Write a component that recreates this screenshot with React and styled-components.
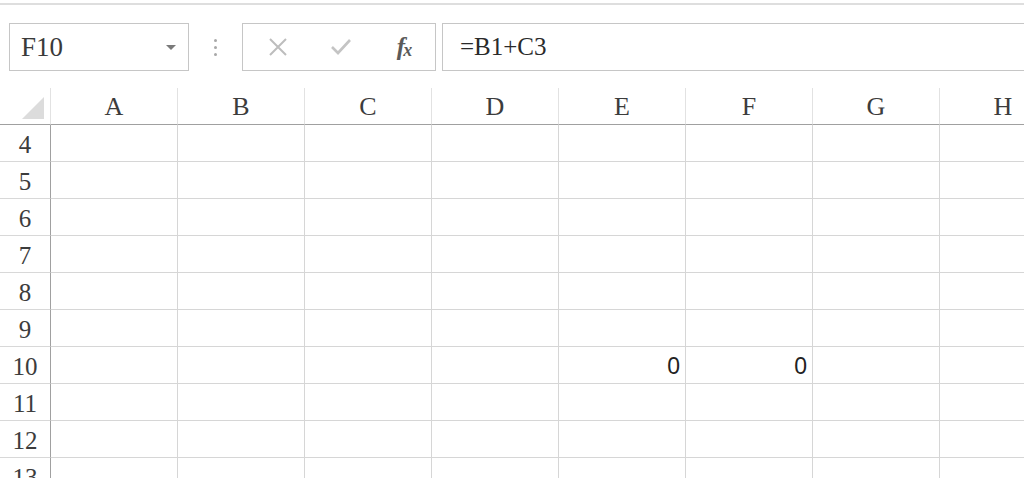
import React from "react";
import styled, { createGlobalStyle } from "styled-components";

const GlobalStyle = createGlobalStyle`
  html, body {
    margin: 0;
    padding: 0;
    background: #ffffff;
    overflow: hidden;
  }
  * {
    box-sizing: border-box;
  }
`;

const COLUMNS = ["A", "B", "C", "D", "E", "F", "G", "H"];
const ROWS = [4, 5, 6, 7, 8, 9, 10, 11, 12, 13];
// values shown in the sheet, keyed by "row:col"
const VALUES = { "10:E": "0", "10:F": "0" };

const serif = `"Liberation Serif", "DejaVu Serif", serif`;

const Page = styled.div`
  width: 1024px;
  height: 478px;
  overflow: hidden;
  padding-top: 3px;
  font-family: ${serif};
`;

const TopRule = styled.div`
  height: 2px;
  background: #dedede;
`;

const FormulaBar = styled.div`
  display: flex;
  align-items: center;
  height: 48px;
  margin-top: 18px;
  padding-left: 9px;
`;

const NameBox = styled.div`
  position: relative;
  display: flex;
  align-items: center;
  width: 180px;
  height: 48px;
  border: 1px solid #c6c6c6;
  padding-left: 11px;
  font-family: ${serif};
  font-size: 27px;
  color: #3a3a3a;
`;

const Caret = styled.span`
  position: absolute;
  right: 12px;
  top: 21px;
  width: 0;
  height: 0;
  border-left: 5px solid transparent;
  border-right: 5px solid transparent;
  border-top: 5px solid #7a7a7a;
`;

const Grip = styled.div`
  display: flex;
  flex-direction: column;
  align-items: center;
  justify-content: center;
  gap: 4px;
  width: 53px;
  height: 48px;
  & > span {
    width: 3px;
    height: 3px;
    border-radius: 50%;
    background: #a8a8a8;
  }
`;

const ActionBox = styled.div`
  display: flex;
  align-items: center;
  width: 194px;
  height: 48px;
  border: 1px solid #c6c6c6;
  padding-left: 3px;
`;

const ActionSlot = styled.div`
  display: flex;
  align-items: center;
  justify-content: center;
  width: 63px;
  height: 100%;
`;

const FxLabel = styled.span`
  font-family: ${serif};
  font-style: italic;
  font-weight: bold;
  color: #5a5a5a;
  font-size: 25px;
  letter-spacing: -2px;
  & > small {
    font-size: 18px;
    position: relative;
    top: 1px;
  }
`;

const FormulaInput = styled.div`
  flex: 1;
  display: flex;
  align-items: center;
  height: 48px;
  margin-left: 6px;
  border: 1px solid #c6c6c6;
  border-right: none;
  padding-left: 17px;
  font-family: ${serif};
  font-size: 25px;
  color: #2a2a2a;
`;

const Sheet = styled.div`
  display: grid;
  grid-template-columns: 51px repeat(8, 127px);
  grid-auto-rows: 37px;
  margin-top: 17px;
  width: 1067px;
`;

const Corner = styled.div`
  position: relative;
  border-bottom: 1px solid #a0a0a0;
  border-right: 1px solid #e2e2e2;
  &::after {
    content: "";
    position: absolute;
    right: 6px;
    bottom: 5px;
    width: 0;
    height: 0;
    border-left: 22px solid transparent;
    border-bottom: 22px solid #dcdcdc;
  }
`;

const ColHeader = styled.div`
  display: flex;
  align-items: center;
  justify-content: center;
  border-bottom: 1px solid #a0a0a0;
  border-right: 1px solid #e2e2e2;
  font-family: ${serif};
  font-size: 26px;
  color: #3c3c3c;
  padding-top: 2px;
`;

const RowHeader = styled.div`
  display: flex;
  align-items: center;
  justify-content: center;
  border-right: 1px solid #a0a0a0;
  border-bottom: 1px solid #d8d8d8;
  font-family: ${serif};
  font-size: 25px;
  color: #3c3c3c;
  padding-top: 3px;
`;

const Cell = styled.div`
  display: flex;
  align-items: center;
  justify-content: ${(p) => (p.$numeric ? "flex-end" : "flex-start")};
  padding-right: 5px;
  border-right: 1px solid #d6d6d6;
  border-bottom: 1px solid #d6d6d6;
  font-family: "Liberation Sans", Arial, sans-serif;
  font-size: 23px;
  color: #222222;
  padding-top: 2px;
`;

const CancelIcon = () => (
  <svg width="20" height="20" viewBox="0 0 20 20">
    <path d="M2 2 L18 18 M18 2 L2 18" stroke="#bdbdbd" strokeWidth="2" fill="none" />
  </svg>
);

const ConfirmIcon = () => (
  <svg width="22" height="18" viewBox="0 0 22 18">
    <path d="M2 9 L8 15 L20 2" stroke="#c4c4c4" strokeWidth="2.6" fill="none" />
  </svg>
);

const App = () => {
  return (
    <>
      <GlobalStyle />
      <Page>
        <TopRule />

        {/* formula bar */}
        <FormulaBar>
          <NameBox>
            F10
            <Caret />
          </NameBox>
          <Grip>
            <span />
            <span />
            <span />
          </Grip>
          <ActionBox>
            <ActionSlot>
              <CancelIcon />
            </ActionSlot>
            <ActionSlot>
              <ConfirmIcon />
            </ActionSlot>
            <ActionSlot>
              <FxLabel>
                f<small>x</small>
              </FxLabel>
            </ActionSlot>
          </ActionBox>
          <FormulaInput>=B1+C3</FormulaInput>
        </FormulaBar>

        {/* grid */}
        <Sheet>
          <Corner />
          {COLUMNS.map((c) => (
            <ColHeader key={c}>{c}</ColHeader>
          ))}
          {ROWS.map((r) => (
            <React.Fragment key={r}>
              <RowHeader>{r}</RowHeader>
              {COLUMNS.map((c) => {
                const v = VALUES[`${r}:${c}`];
                return (
                  <Cell key={c} $numeric={v !== undefined}>
                    {v}
                  </Cell>
                );
              })}
            </React.Fragment>
          ))}
        </Sheet>
      </Page>
    </>
  );
};

export default App;
